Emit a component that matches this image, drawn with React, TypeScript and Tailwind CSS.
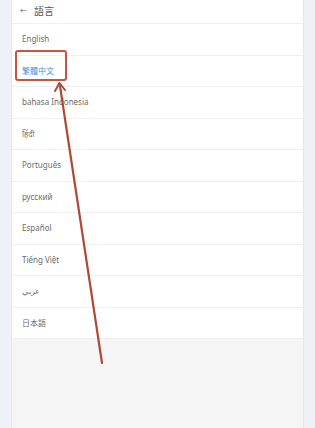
const languages = [
  'English',
  '繁體中文',
  'bahasa Indonesia',
  'हिंदी',
  'Português',
  'русский',
  'Español',
  'Tiếng Việt',
  'عربي',
  '日本語',
];

export default function App() {
  return (
    <div
      className="relative w-[315px] h-[428px] overflow-hidden bg-[#eef1f5] px-[11px]"
      style={{ fontFamily: '"Noto Sans", "Noto Sans CJK TC", sans-serif' }}
    >
      <div className="flex flex-col h-full bg-[#f5f5f6] border-x border-[#e4e7eb]">
        <div className="bg-white">
          <div className="h-[24px] flex items-center gap-[7px] pl-[8px] border-b border-[#f0f0f0]">
            <span className="text-[7px] text-[#666]">←</span>
            <span className="text-[10px] text-[#555]">語言</span>
          </div>
          {languages.map((lang, i) => (
            <div
              key={lang}
              className="h-[31.5px] flex items-center pl-[10px] border-b border-[#f0f0f0]"
            >
              <span className={`text-[8px] ${i === 1 ? 'text-[#4a8fe0]' : 'text-[#6b6b6b]'}`}>{lang}</span>
            </div>
          ))}
        </div>
      </div>

      {/* annotation */}
      <div className="absolute left-[15px] top-[50px] w-[52px] h-[31px] rounded-[3px] border-2 border-[#c4553e]" />
      <svg className="absolute left-0 top-0" width="315" height="428" viewBox="0 0 315 428">
        <line x1="102" y1="363" x2="60" y2="86" stroke="#b04836" strokeWidth="2.2" strokeLinecap="round" />
        <path d="M55 91 L59.5 83 L65 90" fill="none" stroke="#b04836" strokeWidth="2" strokeLinecap="round" strokeLinejoin="round" />
      </svg>
    </div>
  );
}
